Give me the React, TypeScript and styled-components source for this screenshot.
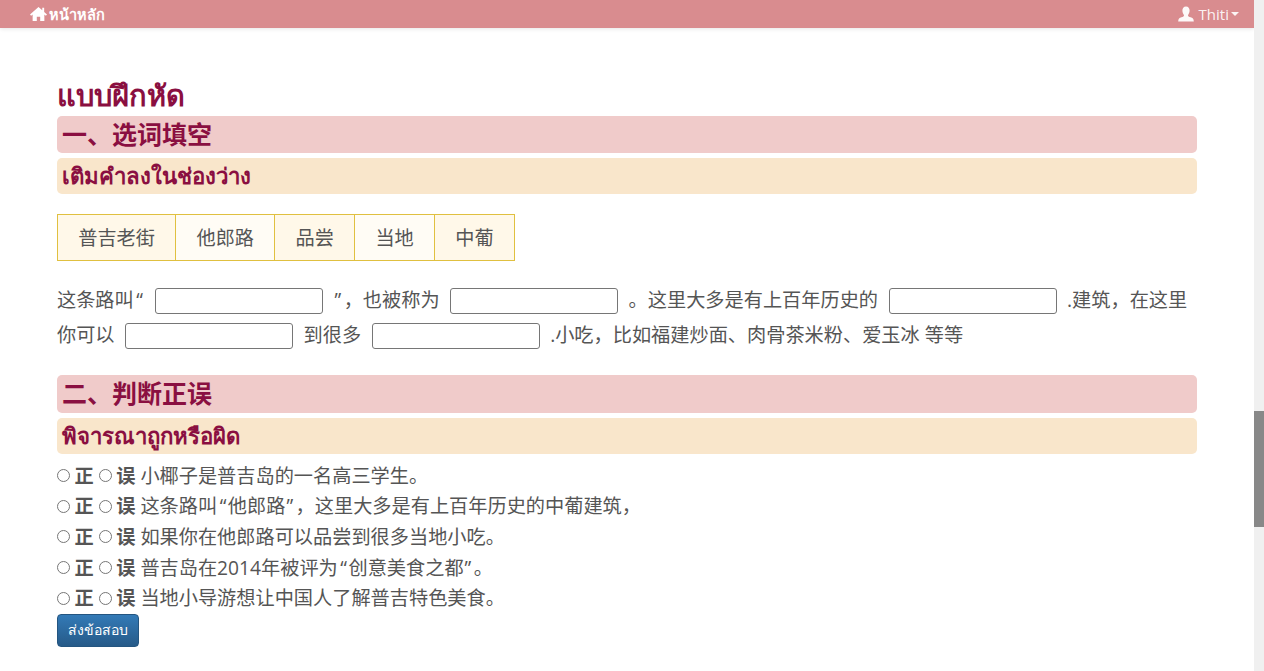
import React from "react";
import styled, { createGlobalStyle } from "styled-components";

const GlobalStyle = createGlobalStyle`
  html, body {
    margin: 0;
    padding: 0;
    height: 100%;
    overflow: hidden;
    background: #fff;
  }
  body {
    font-family: "Open Sans", "Noto Sans CJK SC", "Noto Sans", sans-serif;
    font-size: 19.2px;
    color: #555;
  }
  * { box-sizing: border-box; }
`;

const Shell = styled.div`
  display: flex;
  height: 671px;
  overflow: hidden;
`;

const Main = styled.div`
  flex: 1;
  min-width: 0;
`;

const ScrollTrack = styled.div`
  position: relative;
  width: 10px;
  background: #f0f0f0;
`;

const ScrollThumb = styled.div`
  position: absolute;
  top: 411px;
  left: 0;
  width: 10px;
  height: 116px;
  background: #888;
`;

const Navbar = styled.nav`
  display: flex;
  justify-content: space-between;
  align-items: center;
  height: 28px;
  padding: 0 15px 0 30px;
  background: #d98c8f;
  box-shadow: 0 1px 4px rgba(0, 0, 0, 0.1);
  color: #fff;
`;

const HomeLink = styled.a`
  display: flex;
  align-items: center;
  gap: 2px;
  font-size: 14.5px;
  font-weight: 700;
`;

const UserLink = styled.a`
  display: flex;
  align-items: center;
  gap: 5px;
  font-size: 15px;
  color: rgba(255, 255, 255, 0.9);
`;

const Caret = styled.span`
  width: 0;
  height: 0;
  margin-left: -3px;
  border-top: 4px solid rgba(255, 255, 255, 0.9);
  border-left: 4px solid transparent;
  border-right: 4px solid transparent;
`;

const Content = styled.main`
  padding: 52px 0 0 57px;
  width: 1197px;
`;

const PageTitle = styled.h2`
  margin: 0;
  height: 30px;
  line-height: 30px;
  font-size: 29px;
  font-weight: 800;
  color: #8a0f41;
`;

const SectionBar = styled.h3<{ $tall?: boolean }>`
  margin: 6px 0 0;
  padding-left: 5px;
  height: ${(p) => (p.$tall ? "38px" : "37px")};
  line-height: 37px;
  font-size: 25px;
  font-weight: 700;
  color: #8a0f41;
  background: #f0cbca;
  border-radius: 5px;
`;

const SubBar = styled.h4`
  margin: 5px 0 0;
  padding-left: 5px;
  height: 36px;
  line-height: 36px;
  font-size: 22.2px;
  font-weight: 800;
  color: #8a0f41;
  background: #f9e6cb;
  border-radius: 5px;
`;

const WordBank = styled.div`
  display: inline-flex;
  margin: 20px 0 0;
  border: 1px solid #e0c040;
`;

const WordCell = styled.div<{ $first?: boolean; $odd?: boolean }>`
  padding: 0 20.25px;
  height: 45px;
  line-height: 45px;
  background: ${(p) => (p.$odd ? "#fff8e9" : "#fffcf5")};
  border-left: ${(p) => (p.$first ? "none" : "1px solid #e0c040")};
`;

const Passage = styled.p`
  margin: 21px 0 0;
  line-height: 35px;
`;

const Blank = styled.input`
  width: 168px;
  height: 26px;
  margin: -2px 10.5px;
  padding: 0 4px;
  vertical-align: 2px;
  background: #fff;
  border: 1px solid #767676;
  border-radius: 3px;
`;

const OpenQuote = styled.span`
  margin: 0 1.5px 0 2.5px;
`;

const CloseQuote = styled.span`
  margin: 0 2.5px 0 1px;
`;

const JudgeSection = styled.section`
  margin-top: 23px;
`;

const QuizList = styled.div`
  margin-top: 5.5px;
`;

const QuizRow = styled.div`
  display: flex;
  align-items: center;
  height: 30.6px;
`;

const Radio = styled.input.attrs({ type: "radio" })`
  width: 13px;
  height: 13px;
  margin: 2px 4.5px 0 0;
`;

const Choice = styled.b`
  margin-right: 5px;
  font-weight: 700;
`;

const Submit = styled.button`
  display: block;
  width: 82px;
  height: 33px;
  margin-top: 1.5px;
  padding: 0;
  color: #fff;
  font: 500 14px "Open Sans", "Noto Sans", sans-serif;
  background: linear-gradient(#337ab7, #265a88);
  border: 1px solid #245580;
  border-radius: 4px;
`;

const HomeIcon = () => (
  <svg width="17" height="16" viewBox="0 0 18 16" fill="#fff">
    <path d="M9 0.5 L13 4 V1.5 H15 V5.8 L18 8.5 L16.8 9.8 L15.2 8.4 V15.5 H10.8 V11 H7.2 V15.5 H2.8 V8.4 L1.2 9.8 L0 8.5 Z" />
  </svg>
);

const UserIcon = () => (
  <svg width="16" height="16" viewBox="0 0 16 16" fill="rgba(255,255,255,0.95)">
    <path d="M8 0.5 C10.4 0.5 11.6 2.3 11.6 4.6 C11.6 6.8 10.6 8.3 10 9.2 C10 10.2 10.8 10.7 12.6 11.3 C14.6 12 15.8 12.8 15.8 15.5 H0.2 C0.2 12.8 1.4 12 3.4 11.3 C5.2 10.7 6 10.2 6 9.2 C5.4 8.3 4.4 6.8 4.4 4.6 C4.4 2.3 5.6 0.5 8 0.5 Z" />
  </svg>
);

const words = ["普吉老街", "他郎路", "品尝", "当地", "中葡"];

const statements: React.ReactNode[] = [
  "小椰子是普吉岛的一名高三学生。",
  <>
    这条路叫<OpenQuote>“</OpenQuote>他郎路<CloseQuote>”</CloseQuote>，这里大多是有上百年历史的中葡建筑，
  </>,
  "如果你在他郎路可以品尝到很多当地小吃。",
  <>
    普吉岛在2014年被评为<OpenQuote>“</OpenQuote>创意美食之都<CloseQuote>”</CloseQuote>。
  </>,
  "当地小导游想让中国人了解普吉特色美食。",
];

export default function App() {
  return (
    <Shell>
      <GlobalStyle />
      <Main>
        <Navbar>
          <HomeLink>
            <HomeIcon />
            หน้าหลัก
          </HomeLink>
          <UserLink>
            <UserIcon />
            Thiti
            <Caret />
          </UserLink>
        </Navbar>
        <Content>
          <PageTitle>แบบฝึกหัด</PageTitle>
          <SectionBar>一、选词填空</SectionBar>
          <SubBar>เติมคำลงในช่องว่าง</SubBar>
          <WordBank>
            {words.map((word, i) => (
              <WordCell key={word} $first={i === 0} $odd={i % 2 === 0}>
                {word}
              </WordCell>
            ))}
          </WordBank>
          <Passage>
            这条路叫<OpenQuote>“</OpenQuote>
            <Blank />
            <CloseQuote>”</CloseQuote>，也被称为
            <Blank />
            。这里大多是有上百年历史的
            <Blank />
            .建筑，在这里你可以
            <Blank />
            到很多
            <Blank />
            .小吃，比如福建炒面、肉骨茶米粉、爱玉冰 等等
          </Passage>
          <JudgeSection>
            <SectionBar $tall>二、判断正误</SectionBar>
            <SubBar>พิจารณาถูกหรือผิด</SubBar>
            <QuizList>
              {statements.map((text, i) => (
                <QuizRow key={i}>
                  <Radio name={`q${i}`} />
                  <Choice>正</Choice>
                  <Radio name={`q${i}`} />
                  <Choice>误</Choice>
                  <span>{text}</span>
                </QuizRow>
              ))}
            </QuizList>
            <Submit>ส่งข้อสอบ</Submit>
          </JudgeSection>
        </Content>
      </Main>
      <ScrollTrack>
        <ScrollThumb />
      </ScrollTrack>
    </Shell>
  );
}
